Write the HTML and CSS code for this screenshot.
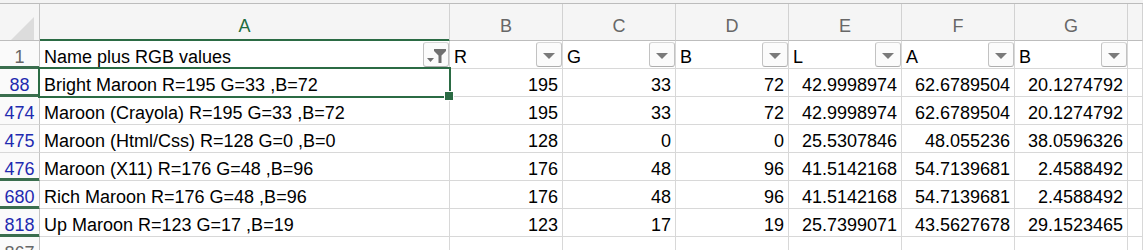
FILE: index.html
```html
<!DOCTYPE html>
<html lang="en">
<head>
    <meta charset="UTF-8">
    <title>Maroon colours</title>
    <link rel="stylesheet" href="styles.css">
</head>
<body>
    <div class="topbar"></div>

    <div class="sheet">
        <!-- column headers -->
        <div class="corner">
            <svg width="24" height="24" viewBox="0 0 24 24"><polygon points="0,24 24,0 24,24" fill="#dcdcdc"/></svg>
        </div>
        <div class="col active">A</div>
        <div class="col">B</div>
        <div class="col">C</div>
        <div class="col">D</div>
        <div class="col">E</div>
        <div class="col">F</div>
        <div class="col">G</div>
        <div class="col"></div>

        <!-- row 1: filter headers -->
        <div class="rn plain cut">1</div>
        <div class="filter"><span>Name plus RGB values</span>
            <button class="drop"><svg width="24" height="23" viewBox="0 0 24 23"><polygon points="3,15 10,15 6.5,19" fill="#707070"/><path d="M10 6 H22 V8 L17.5 12.5 V20 H14.5 V12.5 L10 8 Z" fill="#707070"/></svg></button>
        </div>
        <div class="filter"><span>R</span><button class="drop"><svg width="24" height="23" viewBox="0 0 24 23"><polygon points="6,10 18,10 12,16" fill="#7a7a7a"/></svg></button></div>
        <div class="filter"><span>G</span><button class="drop"><svg width="24" height="23" viewBox="0 0 24 23"><polygon points="6,10 18,10 12,16" fill="#7a7a7a"/></svg></button></div>
        <div class="filter"><span>B</span><button class="drop"><svg width="24" height="23" viewBox="0 0 24 23"><polygon points="6,10 18,10 12,16" fill="#7a7a7a"/></svg></button></div>
        <div class="filter"><span>L</span><button class="drop"><svg width="24" height="23" viewBox="0 0 24 23"><polygon points="6,10 18,10 12,16" fill="#7a7a7a"/></svg></button></div>
        <div class="filter"><span>A</span><button class="drop"><svg width="24" height="23" viewBox="0 0 24 23"><polygon points="6,10 18,10 12,16" fill="#7a7a7a"/></svg></button></div>
        <div class="filter"><span>B</span><button class="drop"><svg width="24" height="23" viewBox="0 0 24 23"><polygon points="6,10 18,10 12,16" fill="#7a7a7a"/></svg></button></div>
        <div></div>

        <!-- data rows -->
        <div class="rn cut">88</div>
        <div class="sel">Bright Maroon R=195 G=33 ,B=72</div>
        <div class="num">195</div><div class="num">33</div><div class="num">72</div>
        <div class="num">42.9998974</div><div class="num">62.6789504</div><div class="num">20.1274792</div>
        <div></div>

        <div class="rn">474</div>
        <div>Maroon (Crayola) R=195 G=33 ,B=72</div>
        <div class="num">195</div><div class="num">33</div><div class="num">72</div>
        <div class="num">42.9998974</div><div class="num">62.6789504</div><div class="num">20.1274792</div>
        <div></div>

        <div class="rn">475</div>
        <div>Maroon (Html/Css) R=128 G=0 ,B=0</div>
        <div class="num">128</div><div class="num">0</div><div class="num">0</div>
        <div class="num">25.5307846</div><div class="num">48.055236</div><div class="num">38.0596326</div>
        <div></div>

        <div class="rn cut">476</div>
        <div>Maroon (X11) R=176 G=48 ,B=96</div>
        <div class="num">176</div><div class="num">48</div><div class="num">96</div>
        <div class="num">41.5142168</div><div class="num">54.7139681</div><div class="num">2.4588492</div>
        <div></div>

        <div class="rn cut">680</div>
        <div>Rich Maroon R=176 G=48 ,B=96</div>
        <div class="num">176</div><div class="num">48</div><div class="num">96</div>
        <div class="num">41.5142168</div><div class="num">54.7139681</div><div class="num">2.4588492</div>
        <div></div>

        <div class="rn cut">818</div>
        <div>Up Maroon R=123 G=17 ,B=19</div>
        <div class="num">123</div><div class="num">17</div><div class="num">19</div>
        <div class="num">25.7399071</div><div class="num">43.5627678</div><div class="num">29.1523465</div>
        <div></div>

        <div class="rn plain">867</div>
        <div></div><div></div><div></div><div></div><div></div><div></div><div></div><div></div>
    </div>
</body>
</html>
```

FILE: styles.css
```css
* {
    margin: 0;
    padding: 0;
    box-sizing: border-box;
}

body {
    background: #fff;
    color: #000;
    font-family: "Liberation Sans", Arial, sans-serif;
    font-size: 18px;
    overflow: hidden;
}

.topbar {
    height: 4px;
    background: #f3f3f3;
    border-bottom: 1px solid #bcbcbc;
}

.sheet {
    display: grid;
    grid-template-columns: 40px 410px repeat(6, 113px) 1fr;
    grid-template-rows: 37px;
    grid-auto-rows: 28px;
}

.sheet > div {
    border-right: 1px solid #d8d8d8;
    border-bottom: 1px solid #d8d8d8;
    padding: 4px 4px 0;
    line-height: 24px;
    white-space: nowrap;
    overflow: hidden;
}

/* column letters */
.sheet > .corner {
    background: #f5f5f5;
    border-right-color: #c4c4c4;
    border-bottom-color: #bdbdbd;
    padding: 13px 0 0 10px;
}

.corner svg {
    display: block;
}

.sheet > .col {
    background: #f5f5f5;
    border-right-color: #d2d2d2;
    border-bottom-color: #bdbdbd;
    color: #676767;
    text-align: center;
    padding-top: 7px;
    line-height: 30px;
}

.sheet > .col.active {
    color: #1f6d40;
    border-bottom-color: #2b6b44;
    box-shadow: inset 0 -1px 0 #2b6b44;
}

/* row numbers */
.sheet > .rn {
    background: #fafafa;
    border-right-color: #c4c4c4;
    color: #1f2bb0;
    text-align: center;
    padding: 4px 0 0;
}

.sheet > .rn.plain {
    color: #666;
}

.sheet > .rn.cut {
    border-bottom-color: #3a6e4e;
    box-shadow: inset 0 -2px 0 #3a6e4e;
}

/* filter header row */
.sheet > .filter {
    display: flex;
    justify-content: space-between;
    align-items: flex-start;
    padding: 1px 0 0 4px;
}

.filter span {
    padding-top: 3px;
}

.drop {
    width: 26px;
    height: 25px;
    background: #fbfbfb;
    border: 1px solid #c2c2c2;
    border-top-color: #d6d6d6;
    border-bottom-color: #aeaeae;
    border-radius: 3px;
    display: flex;
    align-items: center;
    justify-content: center;
}

.drop svg {
    display: block;
}

.sheet > .num {
    text-align: right;
}

/* active cell */
.sheet > .sel {
    position: relative;
    overflow: visible;
    z-index: 2;
}

.sel::before {
    content: "";
    position: absolute;
    left: -2px;
    top: -2px;
    right: -2px;
    bottom: -2px;
    border: 2px solid #2b6b44;
}

.sel::after {
    content: "";
    position: absolute;
    right: -5px;
    bottom: -5px;
    width: 8px;
    height: 8px;
    background: #2b6b44;
    border: 1px solid #fff;
}
```
